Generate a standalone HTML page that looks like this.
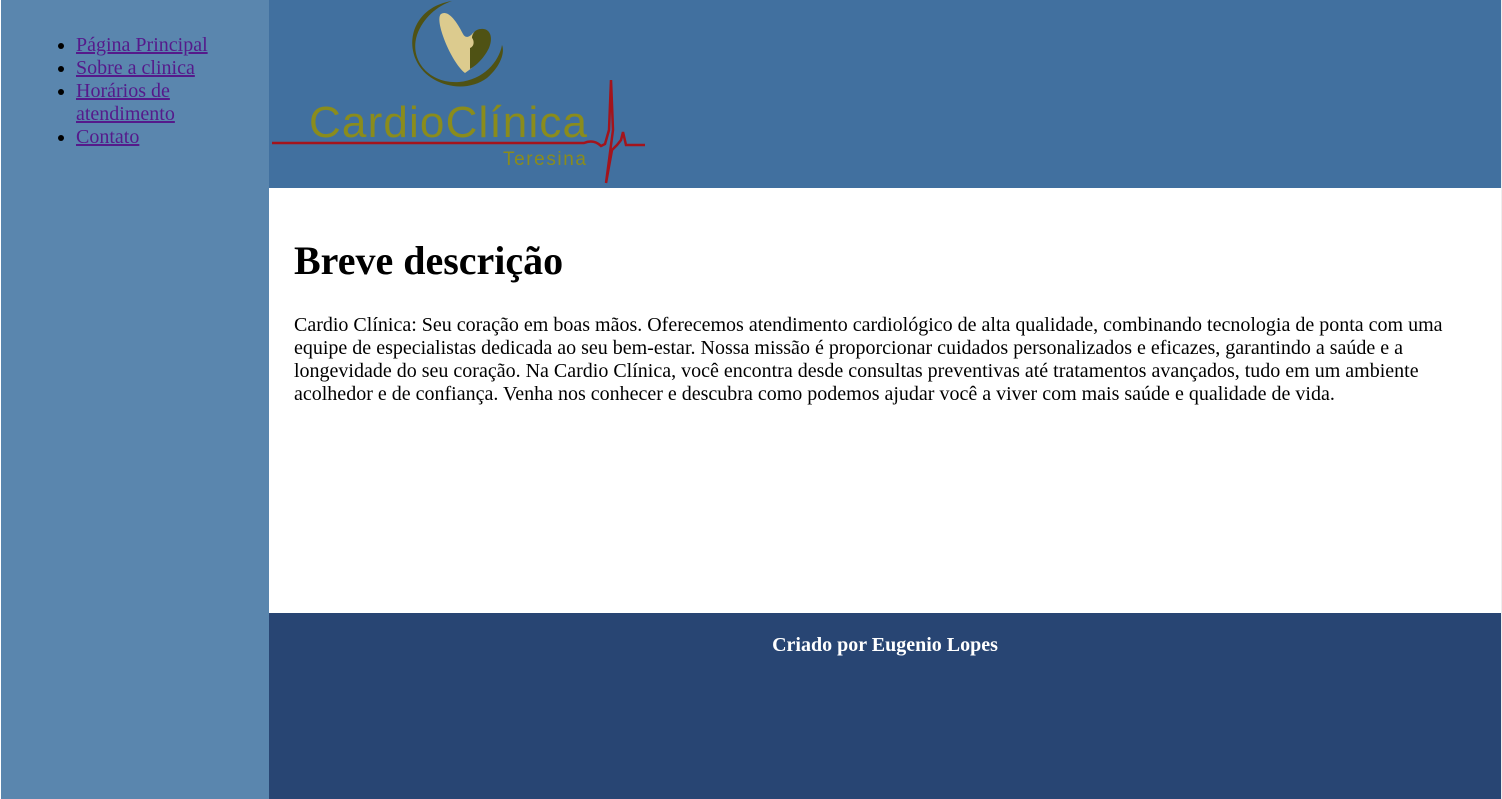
<!DOCTYPE html>
<html><head><meta charset="utf-8"><style>
*{margin:0;padding:0;box-sizing:border-box}
body{width:1502px;height:799px;overflow:hidden;background:#fff;font-family:"Liberation Serif",serif;position:relative}
#side{position:absolute;left:1px;top:0;width:268px;height:799px;background:#5a86ae}
#side ul{position:absolute;left:75px;top:34px;width:150px;font-size:20px;line-height:23px;list-style:disc}
#side a{color:#551a8b}
#head{position:absolute;left:269px;top:0;width:1232px;height:188px;background:#41709f}
#main{position:absolute;left:269px;top:188px;width:1232px;height:425px;background:#fff}
#main h1{position:absolute;left:25px;top:50px;font-size:40px;line-height:46px;font-weight:bold}
#main p{position:absolute;left:25px;top:126px;width:1180px;font-size:20px;line-height:23px}
#foot{position:absolute;left:269px;top:613px;width:1232px;height:186px;background:#284573;color:#fff;text-align:center;font-weight:bold;font-size:20px;padding-top:21px}
#rb{position:absolute;left:1501px;top:0;width:1px;height:799px;background:#eee}
</style></head><body>
<div id="side"><ul><li><a href="#">Página Principal</a></li><li><a href="#">Sobre a clinica</a></li><li><a href="#">Horários de atendimento</a></li><li><a href="#">Contato</a></li></ul></div>
<div id="head">
<svg width="390" height="190" viewBox="0 0 390 190" style="position:absolute;left:0;top:0">
<path d="M183 1 C150 6 136 35 147 60 C158 85 195 95 218 78 C232 66 236 52 233 45 C230 62 214 80 190 82 C160 84 140 60 148 35 C154 18 168 6 183 1Z" fill="#4f5214"/>
<path d="M172 14 C165 20 182 62 196 73 C208 65 222 50 218 36 C214 30 208 30 204 33 C200 38 196 38 194 34 C186 18 178 10 172 14Z" fill="#dccb8e"/>
<path d="M212 29 C220 28 225 36 220 48 C214 60 206 66 201 69 L201 48 C206 46 205 40 203 38 C203 33 207 29 212 29Z" fill="#4f5214"/>
<text x="40" y="137" font-family="Liberation Sans,sans-serif" font-size="44" fill="#8a8c1c" textLength="278">CardioClínica</text>
<text x="234" y="165" font-family="Liberation Sans,sans-serif" font-size="19" fill="#8a8c1c" textLength="83">Teresina</text>
<path d="M3 143 L315 143 C322 140 328 142 332 146 L336 144 L340 130 L342 80 L344 130 L337 183 L343 150 L348 145 L352 140 L354 132 L357 145 L376 145" fill="none" stroke="#a3141c" stroke-width="2.5"/>
</svg>
</div>
<div id="main"><h1>Breve descrição</h1>
<p>Cardio Clínica: Seu coração em boas mãos. Oferecemos atendimento cardiológico de alta qualidade, combinando tecnologia de ponta com uma equipe de especialistas dedicada ao seu bem-estar. Nossa missão é proporcionar cuidados personalizados e eficazes, garantindo a saúde e a longevidade do seu coração. Na Cardio Clínica, você encontra desde consultas preventivas até tratamentos avançados, tudo em um ambiente acolhedor e de confiança. Venha nos conhecer e descubra como podemos ajudar você a viver com mais saúde e qualidade de vida.</p></div>
<div id="foot">Criado por Eugenio Lopes</div>
<div id="rb"></div>
</body></html>
